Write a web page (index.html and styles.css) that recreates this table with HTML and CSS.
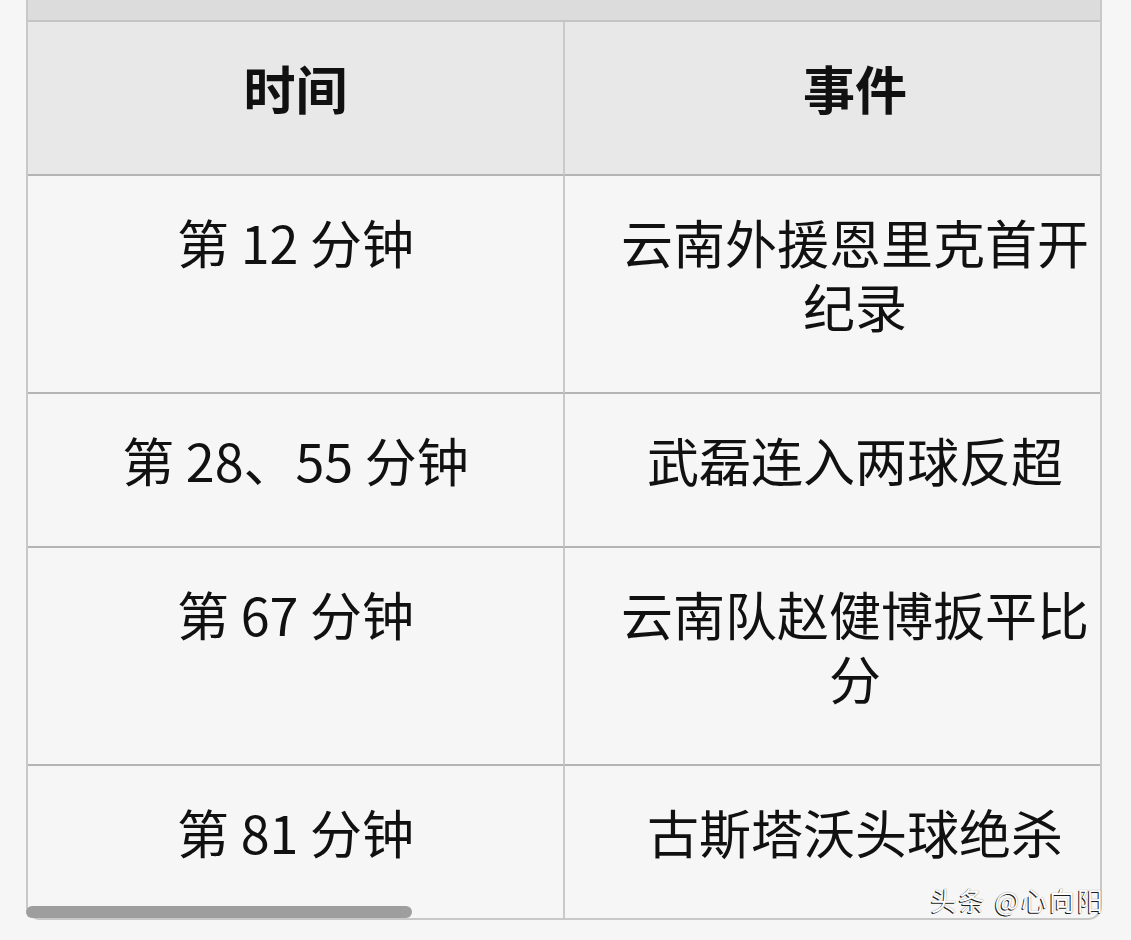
FILE: index.html
```html
<!DOCTYPE html>
<html lang="zh-CN">
<head>
<meta charset="utf-8">
<title>比赛事件</title>
<link rel="stylesheet" href="styles.css">
</head>
<body>
<div class="page">
  <div class="wrap">
    <div class="strip"></div>
    <table class="grid">
      <thead>
        <tr><th class="c1">时间</th><th class="c2">事件</th></tr>
      </thead>
      <tbody>
        <tr><td class="c1">第 12 分钟</td><td class="c2">云南外援恩里克首开纪录</td></tr>
        <tr><td class="c1">第 28、55 分钟</td><td class="c2">武磊连入两球反超</td></tr>
        <tr><td class="c1">第 67 分钟</td><td class="c2">云南队赵健博扳平比分</td></tr>
        <tr class="last"><td class="c1">第 81 分钟</td><td class="c2">古斯塔沃头球绝杀</td></tr>
      </tbody>
    </table>
  </div>
  <div class="thumb"></div>
  <div class="mark">头条 @心向阳</div>
</div>
</body>
</html>
```
FILE: styles.css
```css
html, body {
  margin: 0;
  padding: 0;
  background: #f6f6f6;
}
body {
  font-family: "Noto Sans CJK SC", "Noto Sans", sans-serif;
  color: #111;
}
.page {
  position: relative;
  width: 1131px;
  height: 940px;
  overflow: hidden;
}
.wrap {
  margin-left: 26px;
  width: 1072px;
  border: 2px solid #c8c8c8;
  border-top: none;
  border-radius: 0 0 14px 14px;
  overflow: hidden;
  background: #f6f6f6;
}
.strip {
  height: 20px;
  background: #dcdcdc;
  border-bottom: 2px solid #c4c4c4;
}
.grid {
  width: 100%;
  border-collapse: separate;
  border-spacing: 0;
  table-layout: fixed;
}
.grid th, .grid td {
  font-size: 52px;
  line-height: 64px;
  padding: 34px 0 54px;
  text-align: center;
  vertical-align: top;
  border-bottom: 2px solid #b4b4b4;
}
.grid th {
  background: #e8e8e8;
  font-weight: 700;
}
.grid td {
  font-weight: 400;
}
.grid .c1 {
  width: 535px;
  border-right: 2px solid #cacaca;
}
.grid .c2 {
  padding-left: 50px;
  padding-right: 5px;
}
.grid tr.last td {
  border-bottom: none;
}
.thumb {
  position: absolute;
  left: 26px;
  top: 906px;
  width: 386px;
  height: 12px;
  border-radius: 6px;
  background: #9e9e9e;
}
.mark {
  position: absolute;
  right: 26px;
  top: 883px;
  font-size: 26px;
  line-height: 34px;
  letter-spacing: 2px;
  color: #fff;
  text-shadow: -1px 1px 0 rgba(0, 0, 0, 0.9), 0 0 1px rgba(0, 0, 0, 0.6);
  white-space: nowrap;
}
```
